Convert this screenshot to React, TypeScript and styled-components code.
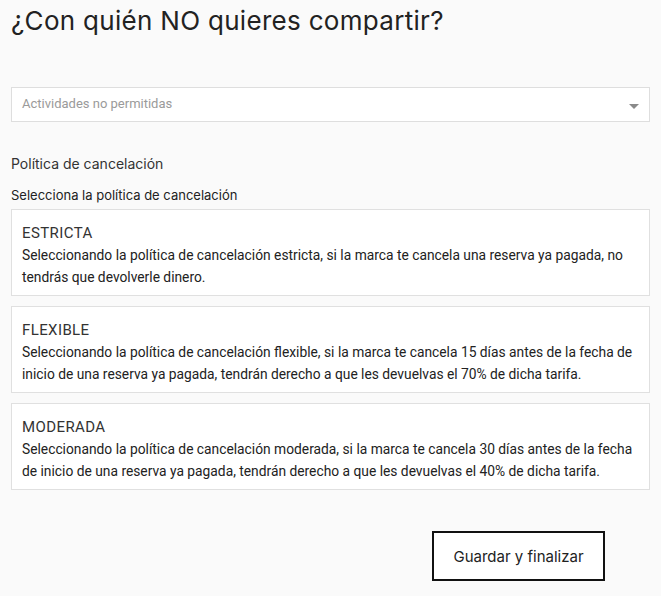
import React from 'react'
import styled, { createGlobalStyle } from 'styled-components'

const GlobalStyle = createGlobalStyle`
  html, body {
    margin: 0;
    padding: 0;
    background-color: #FAFAFA;
  }
`

const Page = styled.div`
  display: flex;
  flex-direction: column;
  padding: 0 11px 15px 11px;
  min-height: 596px;
  box-sizing: border-box;
  font-family: Inter, 'Noto Sans', sans-serif;
  color: #222222;
`

const Title = styled.h1`
  font-weight: 400;
  font-size: 26px;
  line-height: 30px;
  letter-spacing: 0.3px;
  margin: 6px 0 51px 0;
  color: #222222;
`

const Select = styled.div`
  display: flex;
  align-items: center;
  justify-content: space-between;
  height: 35px;
  box-sizing: border-box;
  padding: 0 10px 3px 10px;
  background-color: #FFFFFF;
  border: 1px solid #DEDEDE;
  font-family: Roboto, sans-serif;
  font-size: 13px;
  color: #9A9A9A;
  margin-bottom: 31px;
`

const Arrow = styled.span`
  width: 0;
  height: 0;
  margin-top: 6px;
  border-left: 5px solid transparent;
  border-right: 5px solid transparent;
  border-top: 5px solid #8A8A8A;
`

const SectionLabel = styled.div`
  font-size: 14px;
  line-height: 22px;
  color: #333333;
  margin-bottom: 10px;
`

const Hint = styled.div`
  font-size: 13px;
  line-height: 20px;
  color: #222222;
  margin-bottom: 4px;
`

const Cards = styled.div`
  display: flex;
  flex-direction: column;
  gap: 10px;
`

const Card = styled.div`
  background-color: #FFFFFF;
  border: 1px solid #E0E0E0;
  padding: 12px 6px 7px 10px;
  font-family: Roboto, sans-serif;
`

const CardTitle = styled.div`
  font-size: 15px;
  line-height: 22px;
  letter-spacing: 0.4px;
  color: #333333;
`

const CardText = styled.p`
  margin: 0;
  font-size: 13.8px;
  line-height: 22px;
  color: #222222;
`

const Footer = styled.div`
  display: flex;
  justify-content: flex-end;
  padding-right: 45px;
  margin-top: 41px;
`

const SaveButton = styled.button`
  width: 173px;
  height: 50px;
  border: 2px solid #111111;
  background-color: #FFFFFF;
  font-family: Inter, sans-serif;
  font-size: 15px;
  color: #222222;
  cursor: pointer;
`

const policies = [
  {
    name: 'ESTRICTA',
    text: 'Seleccionando la política de cancelación estricta, si la marca te cancela una reserva ya pagada, no tendrás que devolverle dinero.',
  },
  {
    name: 'FLEXIBLE',
    text: 'Seleccionando la política de cancelación flexible, si la marca te cancela 15 días antes de la fecha de inicio de una reserva ya pagada, tendrán derecho a que les devuelvas el 70% de dicha tarifa.',
  },
  {
    name: 'MODERADA',
    text: 'Seleccionando la política de cancelación moderada, si la marca te cancela 30 días antes de la fecha de inicio de una reserva ya pagada, tendrán derecho a que les devuelvas el 40% de dicha tarifa.',
  },
]

const App: React.FC = () => {
  return (
    <>
      <GlobalStyle />
      <Page>
        <Title>¿Con quién NO quieres compartir?</Title>
        <Select>
          <span>Actividades no permitidas</span>
          <Arrow />
        </Select>
        <SectionLabel>Política de cancelación</SectionLabel>
        <Hint>Selecciona la política de cancelación</Hint>
        <Cards>
          {policies.map((p) => (
            <Card key={p.name}>
              <CardTitle>{p.name}</CardTitle>
              <CardText>{p.text}</CardText>
            </Card>
          ))}
        </Cards>
        <Footer>
          <SaveButton>Guardar y finalizar</SaveButton>
        </Footer>
      </Page>
    </>
  )
}

export default App
